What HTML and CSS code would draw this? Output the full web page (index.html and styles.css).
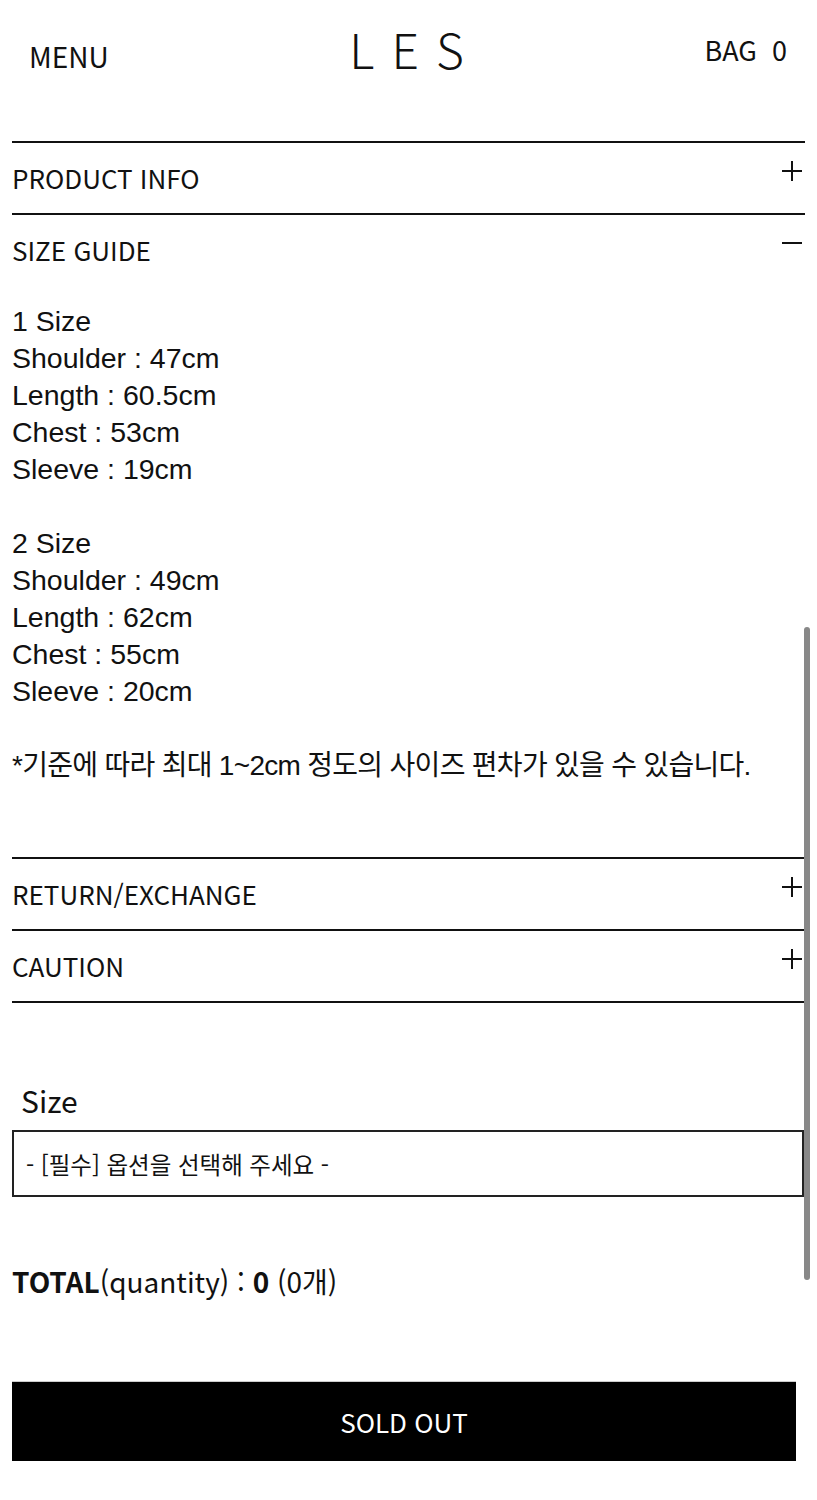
FILE: index.html
```html
<!DOCTYPE html>
<html lang="ko">
<head>
<meta charset="utf-8">
<title>LES</title>
<link rel="stylesheet" href="styles.css">
</head>
<body>
<header class="top">
  <div class="menu">MENU</div>
  <div class="logo">LES</div>
  <div class="bag">BAG&nbsp; 0</div>
</header>
<main class="page">
  <section class="acc">
    <div class="acc-head"><span class="acc-title">PRODUCT INFO</span><span class="icon plus"></span></div>
  </section>
  <section class="acc open">
    <div class="acc-head"><span class="acc-title">SIZE GUIDE</span><span class="icon minus"></span></div>
    <div class="acc-body">
      1 Size<br>
      Shoulder : 47cm<br>
      Length : 60.5cm<br>
      Chest : 53cm<br>
      Sleeve : 19cm<br>
      <br>
      2 Size<br>
      Shoulder : 49cm<br>
      Length : 62cm<br>
      Chest : 55cm<br>
      Sleeve : 20cm<br>
      <br>
      <span class="note">*기준에 따라 최대 1~2cm 정도의 사이즈 편차가 있을 수 있습니다.</span>
    </div>
  </section>
  <section class="acc">
    <div class="acc-head"><span class="acc-title">RETURN/EXCHANGE</span><span class="icon plus"></span></div>
  </section>
  <section class="acc last">
    <div class="acc-head"><span class="acc-title">CAUTION</span><span class="icon plus"></span></div>
  </section>

  <div class="option">
    <div class="opt-label">Size</div>
    <div class="select">- [필수] 옵션을 선택해 주세요 -</div>
  </div>

  <div class="total"><strong>TOTAL</strong>(quantity) : <strong>0</strong> (0개)</div>

  <div class="btn-wrap"><div class="soldout">SOLD OUT</div></div>
</main>
<div class="scrollbar"></div>
</body>
</html>
```

FILE: styles.css
```css
html, body {
  margin: 0;
  padding: 0;
  background: #fff;
  color: #111;
}
body {
  width: 817px;
  min-height: 1500px;
  position: relative;
  font-family: "Noto Sans CJK KR", "Noto Sans", sans-serif;
  overflow: hidden;
}
.top {
  height: 141px;
  display: flex;
  justify-content: space-between;
  align-items: flex-start;
  padding: 0 30px 0 29px;
  box-sizing: border-box;
}
.menu {
  font-size: 28px;
  line-height: 1;
  margin-top: 42px;
}
.logo {
  font-size: 48px;
  font-weight: 200;
  line-height: 1;
  letter-spacing: 17px;
  margin-top: 24px;
  margin-right: -17px;
}
.bag {
  font-size: 27px;
  line-height: 1;
  margin-top: 36px;
}
.page {
  padding: 0 12px;
}
.acc {
  border-top: 2px solid #111;
}
.acc.last {
  border-bottom: 2px solid #111;
}
.acc-head {
  height: 70px;
  display: flex;
  align-items: center;
  justify-content: space-between;
}
.acc-title {
  font-size: 26px;
  line-height: 1;
}
.icon {
  position: relative;
  width: 20px;
  height: 20px;
  margin-right: 3px;
  margin-top: -14px;
}
.icon::before, .icon::after {
  content: "";
  position: absolute;
  background: #111;
}
.icon::before {
  left: 0;
  top: 9px;
  width: 20px;
  height: 2px;
}
.plus::after {
  left: 9px;
  top: 0;
  width: 2px;
  height: 20px;
}
.minus::after {
  display: none;
}
.acc-body {
  font-family: "Liberation Sans", Arial, sans-serif;
  font-size: 28.5px;
  line-height: 37px;
  padding: 18px 0 73px;
  color: #111;
}
.note {
  font-family: "Liberation Sans", "Noto Sans CJK KR", sans-serif;
  font-size: 28px;
  letter-spacing: -0.7px;
}
.option {
  padding-top: 82px;
}
.opt-label {
  font-size: 30px;
  line-height: 1;
  padding-left: 9px;
  margin-bottom: 15px;
}
.select {
  height: 63px;
  border: 2px solid #222;
  display: flex;
  align-items: center;
  padding-left: 12px;
  font-size: 23.5px;
  margin-right: 1px;
}
.total {
  margin-top: 66px;
  font-size: 28px;
  line-height: 36px;
}
.total strong {
  font-weight: 700;
}
.btn-wrap {
  padding: 82px 9px 40px 0;
}
.soldout {
  height: 79px;
  background: #000;
  border-top: 1px solid #ccc;
  color: #fff;
  display: flex;
  align-items: center;
  justify-content: center;
  font-size: 26px;
}
.scrollbar {
  position: absolute;
  left: 804px;
  top: 627px;
  width: 6px;
  height: 653px;
  border-radius: 3px;
  background: #888;
}
```
